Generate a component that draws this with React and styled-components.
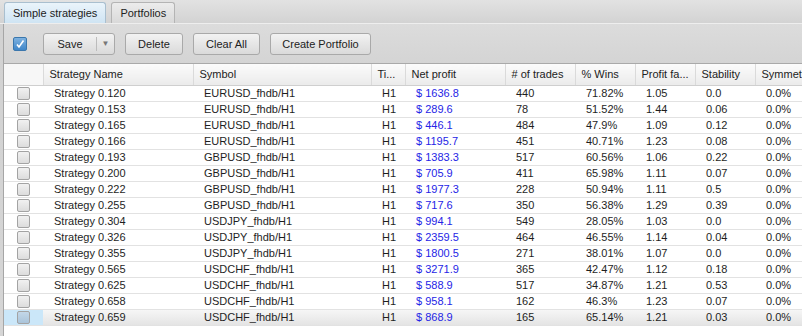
import React from 'react';
import styled, { createGlobalStyle } from 'styled-components';

const GlobalStyle = createGlobalStyle`
  html, body {
    margin: 0;
    padding: 0;
    background: #d6d6d6;
    font-family: "Liberation Sans", Arial, sans-serif;
    font-size: 11px;
    color: #1e1e1e;
    overflow: hidden;
  }
`;

const Page = styled.div`
  width: 802px;
  height: 336px;
  display: flex;
  flex-direction: column;
  overflow: hidden;
  background: linear-gradient(#e2e2e2, #d2d2d2 24px, #d6d6d6);
`;

const TabBar = styled.div`
  height: 24px;
  display: flex;
  align-items: flex-end;
  gap: 5px;
  padding-left: 4px;
  border-bottom: 1px solid #eeeeee;
  box-sizing: border-box;
`;

const Tab = styled.div`
  height: 21px;
  box-sizing: border-box;
  padding: 0 8px;
  display: flex;
  align-items: center;
  border: 1px solid ${p => (p.$active ? '#a9bfcf' : '#b4b4b4')};
  border-bottom: none;
  border-radius: 3px 3px 0 0;
  background: ${p =>
    p.$active
      ? 'linear-gradient(#eaf4fb, #cfe4f3)'
      : 'linear-gradient(#ececec, #d9d9d9)'};
  font-size: 11px;
  color: #222;
`;

const Panel = styled.div`
  flex: 1;
  margin-left: 3px;
  border-left: 1px solid #a6a6a6;
  display: flex;
  flex-direction: column;
  min-height: 0;
`;

const Toolbar = styled.div`
  height: 39px;
  display: flex;
  align-items: center;
  padding-left: 9px;
  gap: 10px;
  background: linear-gradient(#dcdcdc, #d4d4d4);
  border-bottom: 1px solid #a9a9a9;
`;

const MasterCheck = styled.span`
  width: 14px;
  height: 14px;
  box-sizing: border-box;
  border: 1px solid #3b77ad;
  border-radius: 2px;
  background: linear-gradient(#7fb2e0, #3f86c9);
  display: flex;
  align-items: center;
  justify-content: center;
  margin-right: 6px;
`;

const Button = styled.button`
  height: 22px;
  width: ${p => p.$w}px;
  box-sizing: border-box;
  padding: 0;
  display: flex;
  align-items: stretch;
  justify-content: center;
  border: 1px solid #a9a9a9;
  border-radius: 3px;
  background: linear-gradient(#f2f2f2, #dadada);
  font-family: "Liberation Sans", Arial, sans-serif;
  font-size: 11px;
  color: #222;
`;

const ButtonLabel = styled.span`
  flex: 1;
  display: flex;
  align-items: center;
  justify-content: center;
`;

const SplitArrow = styled.span`
  width: 17px;
  display: flex;
  align-items: center;
  justify-content: center;
  border-left: 1px solid #bcbcbc;
  margin: 3px 0;
  color: #777;
  font-size: 8px;
`;

const GridWrap = styled.div`
  flex: 1;
  overflow: hidden;
  background: #ffffff;
`;

const Table = styled.table`
  width: 831px;
  table-layout: fixed;
  border-collapse: collapse;
`;

const HeadCell = styled.th`
  height: 21px;
  padding: 0 0 0 6px;
  box-sizing: border-box;
  text-align: left;
  font-weight: normal;
  font-size: 11px;
  color: #222;
  white-space: nowrap;
  overflow: hidden;
  background: ${p => (p.$blank ? '#f7f7f7' : 'linear-gradient(#fbfbfb, #ebebeb)')};
  border-right: 1px solid #dadada;
  border-bottom: 1px solid #cfcfcf;
`;

const Row = styled.tr`
  height: 16px;
  background: ${p => (p.$selected ? 'linear-gradient(#f6f6f6, #e4e4e4)' : '#fff')};
  border-top: ${p => (p.$selected ? '1px solid #cdcdcd' : 'none')};
`;

const Cell = styled.td`
  height: 16px;
  padding: 0 0 0 11px;
  box-sizing: border-box;
  border-bottom: 1px solid #e2e2e2;
  white-space: nowrap;
  overflow: hidden;
  color: ${p => (p.$money ? '#2525e6' : '#1e1e1e')};
`;

const CheckCell = styled.td`
  padding: 0;
  border-bottom: 1px solid #e2e2e2;
  background: ${p => (p.$selected ? '#cbe7f9' : 'transparent')};
`;

const RowCheck = styled.span`
  display: block;
  width: 13px;
  height: 13px;
  margin: 0 auto;
  box-sizing: border-box;
  border: 1px solid #a3a3a3;
  border-radius: 2px;
  background: ${p =>
    p.$selected ? 'linear-gradient(#c3d7e8, #aac4da)' : 'linear-gradient(#f1f1f1, #dcdcdc)'};
`;

const columns = [
  { key: 'name', title: 'Strategy Name', w: 150 },
  { key: 'sym', title: 'Symbol', w: 178 },
  { key: 'tf', title: 'Ti...', w: 34 },
  { key: 'net', title: 'Net profit', w: 100 },
  { key: 'trades', title: '# of trades', w: 70 },
  { key: 'wins', title: '% Wins', w: 60 },
  { key: 'pf', title: 'Profit fa...', w: 60 },
  { key: 'stab', title: 'Stability', w: 60 },
  { key: 'symm', title: 'Symmetry', w: 80 },
];

const rows = [
  ['Strategy 0.120', 'EURUSD_fhdb/H1', '1636.8', 440, '71.82%', '1.05', '0.0'],
  ['Strategy 0.153', 'EURUSD_fhdb/H1', '289.6', 78, '51.52%', '1.44', '0.06'],
  ['Strategy 0.165', 'EURUSD_fhdb/H1', '446.1', 484, '47.9%', '1.09', '0.12'],
  ['Strategy 0.166', 'EURUSD_fhdb/H1', '1195.7', 451, '40.71%', '1.23', '0.08'],
  ['Strategy 0.193', 'GBPUSD_fhdb/H1', '1383.3', 517, '60.56%', '1.06', '0.22'],
  ['Strategy 0.200', 'GBPUSD_fhdb/H1', '705.9', 411, '65.98%', '1.11', '0.07'],
  ['Strategy 0.222', 'GBPUSD_fhdb/H1', '1977.3', 228, '50.94%', '1.11', '0.5'],
  ['Strategy 0.255', 'GBPUSD_fhdb/H1', '717.6', 350, '56.38%', '1.29', '0.39'],
  ['Strategy 0.304', 'USDJPY_fhdb/H1', '994.1', 549, '28.05%', '1.03', '0.0'],
  ['Strategy 0.326', 'USDJPY_fhdb/H1', '2359.5', 464, '46.55%', '1.14', '0.04'],
  ['Strategy 0.355', 'USDJPY_fhdb/H1', '1800.5', 271, '38.01%', '1.07', '0.0'],
  ['Strategy 0.565', 'USDCHF_fhdb/H1', '3271.9', 365, '42.47%', '1.12', '0.18'],
  ['Strategy 0.625', 'USDCHF_fhdb/H1', '588.9', 517, '34.87%', '1.21', '0.53'],
  ['Strategy 0.658', 'USDCHF_fhdb/H1', '958.1', 162, '46.3%', '1.23', '0.07'],
  ['Strategy 0.659', 'USDCHF_fhdb/H1', '868.9', 165, '65.14%', '1.21', '0.03'],
];

const CheckMark = () => (
  <svg width="10" height="10" viewBox="0 0 10 10">
    <path d="M2 5.5 L4 8 L8.5 1.5" fill="none" stroke="#fff" strokeWidth="1.6" />
  </svg>
);

export default function App() {
  return (
    <>
      <GlobalStyle />
      <Page>
        <TabBar>
          <Tab $active>Simple strategies</Tab>
          <Tab>Portfolios</Tab>
        </TabBar>
        <Panel>
          <Toolbar>
            <MasterCheck>
              <CheckMark />
            </MasterCheck>
            <Button $w={72}>
              <ButtonLabel>Save</ButtonLabel>
              <SplitArrow>▼</SplitArrow>
            </Button>
            <Button $w={58}>
              <ButtonLabel>Delete</ButtonLabel>
            </Button>
            <Button $w={67}>
              <ButtonLabel>Clear All</ButtonLabel>
            </Button>
            <Button $w={101}>
              <ButtonLabel>Create Portfolio</ButtonLabel>
            </Button>
          </Toolbar>
          <GridWrap>
            <Table>
              <colgroup>
                <col style={{ width: 39 }} />
                {columns.map(c => (
                  <col key={c.key} style={{ width: c.w }} />
                ))}
              </colgroup>
              <thead>
                <tr>
                  <HeadCell $blank />
                  {columns.map(c => (
                    <HeadCell key={c.key}>{c.title}</HeadCell>
                  ))}
                </tr>
              </thead>
              <tbody>
                {rows.map((r, i) => {
                  const sel = i === rows.length - 1;
                  return (
                    <Row key={r[0]} $selected={sel}>
                      <CheckCell $selected={sel}>
                        <RowCheck $selected={sel} />
                      </CheckCell>
                      <Cell>{r[0]}</Cell>
                      <Cell>{r[1]}</Cell>
                      <Cell>H1</Cell>
                      <Cell $money>$ {r[2]}</Cell>
                      <Cell>{r[3]}</Cell>
                      <Cell>{r[4]}</Cell>
                      <Cell>{r[5]}</Cell>
                      <Cell>{r[6]}</Cell>
                      <Cell>0.0%</Cell>
                    </Row>
                  );
                })}
              </tbody>
            </Table>
          </GridWrap>
        </Panel>
      </Page>
    </>
  );
}
